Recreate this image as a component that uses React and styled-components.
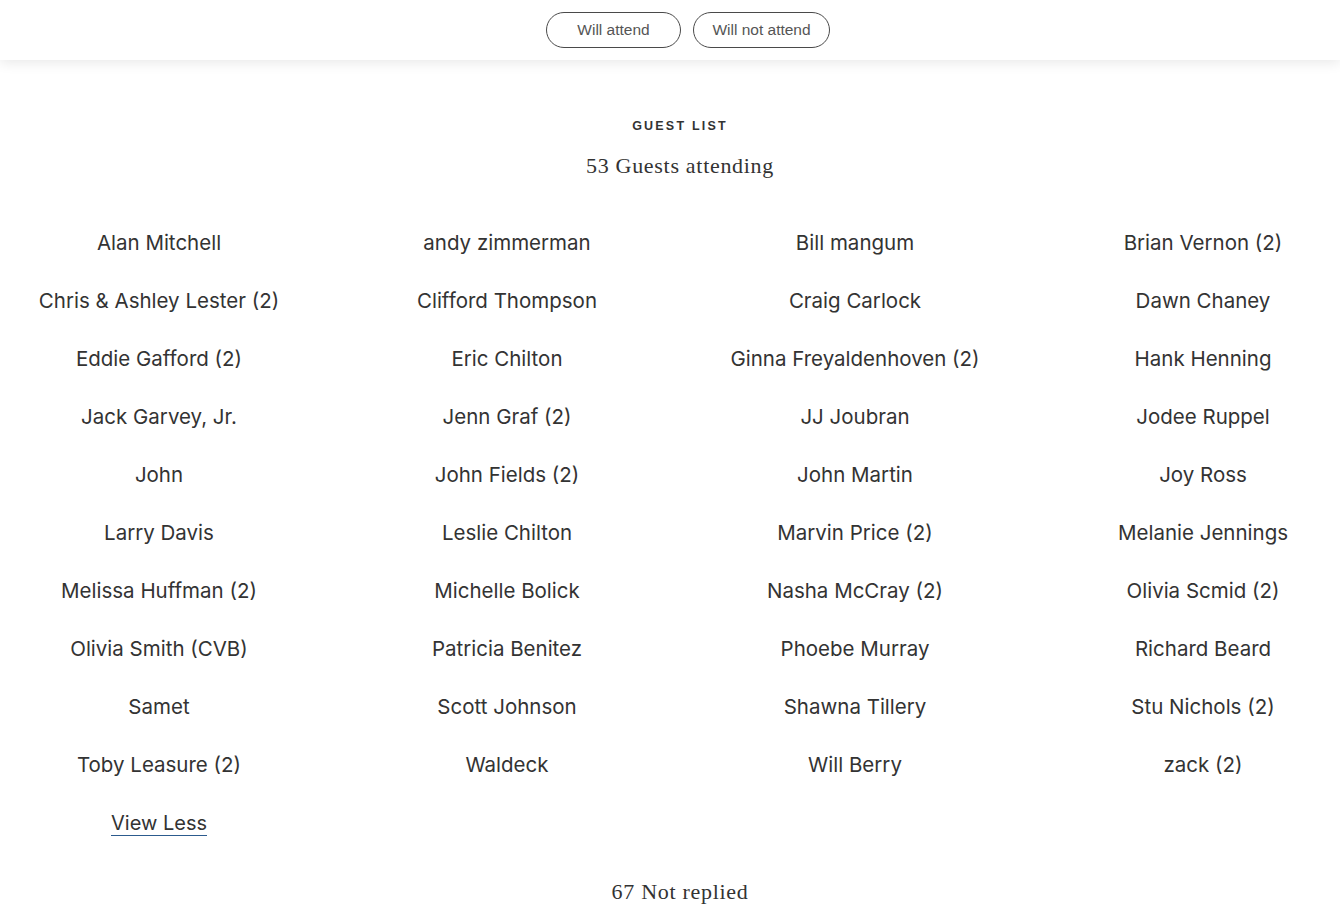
import React from "react";
import styled, { createGlobalStyle } from "styled-components";

const Global = createGlobalStyle`
  html, body { margin: 0; padding: 0; background: #fff; }
  body { overflow: hidden; }
  * { box-sizing: border-box; }
`;

const Page = styled.div`
  width: 1340px;
  min-height: 908px;
  background: #fff;
  overflow: hidden;
`;

const TopBar = styled.header`
  height: 60px;
  display: flex;
  align-items: center;
  justify-content: center;
  gap: 12px;
  padding-left: 36px;
  background: #fff;
  box-shadow: 0 3px 12px rgba(0, 0, 0, 0.09);
  position: relative;
  z-index: 1;
`;

const RsvpButton = styled.button`
  height: 36px;
  width: ${(p) => p.$w}px;
  border: 1px solid #4a4a4a;
  border-radius: 18px;
  background: #fff;
  color: #555;
  font-family: "Liberation Sans", Arial, sans-serif;
  font-size: 15.5px;
  padding: 0;
  cursor: pointer;
`;

const Section = styled.main`
  display: flex;
  flex-direction: column;
  align-items: center;
  padding-top: 58px;
  padding-left: 20px;
`;

const Eyebrow = styled.h2`
  margin: 0;
  font-family: "Liberation Sans", Arial, sans-serif;
  font-weight: 700;
  font-size: 12.5px;
  letter-spacing: 2.2px;
  color: #333;
  line-height: 16px;
`;

const Count = styled.p`
  margin: 19px 0 0;
  font-family: "Liberation Serif", "Times New Roman", serif;
  font-size: 22px;
  letter-spacing: 0.7px;
  color: #333;
  line-height: 26px;
`;

const Grid = styled.ul`
  list-style: none;
  margin: 50px 0 0;
  padding: 0;
  align-self: flex-start;
  width: 1322px;
  display: grid;
  grid-template-columns: repeat(4, 278px);
  column-gap: 70px;
  grid-auto-rows: 58px;
`;

const Guest = styled.li`
  text-align: center;
  font-family: Inter, "Liberation Sans", sans-serif;
  font-size: 20.5px;
  color: #333;
  line-height: 28px;
  white-space: nowrap;
`;

const ViewLess = styled.a`
  display: inline-block;
  font-family: Inter, "Liberation Sans", sans-serif;
  font-size: 20px;
  color: #333;
  line-height: 24px;
  text-decoration: none;
  border-bottom: 1.5px solid #2c5b8e;
  cursor: pointer;
`;

const NotReplied = styled.p`
  margin: 12px 0 0;
  font-family: "Liberation Serif", "Times New Roman", serif;
  font-size: 22px;
  letter-spacing: 0.7px;
  color: #333;
  line-height: 26px;
`;

const guests = [
  "Alan Mitchell", "andy zimmerman", "Bill mangum", "Brian Vernon (2)",
  "Chris & Ashley Lester (2)", "Clifford Thompson", "Craig Carlock", "Dawn Chaney",
  "Eddie Gafford (2)", "Eric Chilton", "Ginna Freyaldenhoven (2)", "Hank Henning",
  "Jack Garvey, Jr.", "Jenn Graf (2)", "JJ Joubran", "Jodee Ruppel",
  "John", "John Fields (2)", "John Martin", "Joy Ross",
  "Larry Davis", "Leslie Chilton", "Marvin Price (2)", "Melanie Jennings",
  "Melissa Huffman (2)", "Michelle Bolick", "Nasha McCray (2)", "Olivia Scmid (2)",
  "Olivia Smith (CVB)", "Patricia Benitez", "Phoebe Murray", "Richard Beard",
  "Samet", "Scott Johnson", "Shawna Tillery", "Stu Nichols (2)",
  "Toby Leasure (2)", "Waldeck", "Will Berry", "zack (2)",
];

export default function App() {
  return (
    <Page>
      <Global />
      <TopBar>
        <RsvpButton $w={135}>Will attend</RsvpButton>
        <RsvpButton $w={137}>Will not attend</RsvpButton>
      </TopBar>
      <Section>
        <Eyebrow>GUEST LIST</Eyebrow>
        <Count>53 Guests attending</Count>
        <Grid>
          {guests.map((g) => (
            <Guest key={g}>{g}</Guest>
          ))}
          <Guest>
            <ViewLess>View Less</ViewLess>
          </Guest>
        </Grid>
        <NotReplied>67 Not replied</NotReplied>
      </Section>
    </Page>
  );
}
